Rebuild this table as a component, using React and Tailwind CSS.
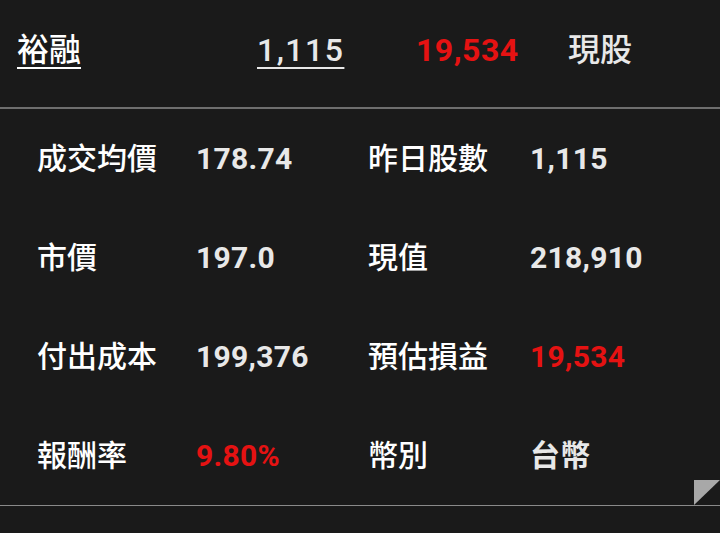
const rows = [
  { l: '成交均價', v: '178.74', l2: '昨日股數', v2: '1,115' },
  { l: '市價', v: '197.0', l2: '現值', v2: '218,910' },
  { l: '付出成本', v: '199,376', l2: '預估損益', v2: '19,534', red2: true },
  { l: '報酬率', v: '9.80%', red: true, l2: '幣別', v2: '台幣' },
];

const cjk = { fontFamily: 'Roboto, "Noto Sans CJK TC", sans-serif' };

export default function App() {
  return (
    <div className="w-[720px] h-[533px] bg-[#1a1a1a] overflow-hidden" style={cjk}>
      {/* header */}
      <div className="h-[107px] flex items-center pb-[8px] text-[32px] font-medium">
        <span className="ml-[17px] w-[240px] text-white underline underline-offset-[6px] decoration-2">裕融</span>
        <span className="w-[159px] text-[#e8e8e8] underline underline-offset-[6px] decoration-2 tracking-[1.5px]">1,115</span>
        <span className="w-[152px] text-[#e51212] font-bold tracking-[0.5px]">19,534</span>
        <span className="text-[#e8e8e8]">現股</span>
      </div>
      <div className="h-[2px] bg-[#6e6e6e]" />

      {/* detail rows */}
      <div className="relative border-b border-[#8a8a8a]">
        {rows.map((r) => (
          <div key={r.l} className="h-[99px] flex items-center pl-[37px] text-[30px] font-medium">
            <span className="w-[159px] text-white">{r.l}</span>
            <span className={`w-[172px] font-bold tracking-[0.3px] ${r.red ? 'text-[#e51212]' : 'text-[#e8e8e8]'}`}>{r.v}</span>
            <span className="w-[162px] text-white">{r.l2}</span>
            <span className={`font-bold tracking-[0.3px] ${r.red2 ? 'text-[#e51212]' : 'text-[#e8e8e8]'}`}>{r.v2}</span>
          </div>
        ))}
        <svg className="absolute right-0 bottom-0" width="26" height="25" viewBox="0 0 26 25">
          <polygon points="0,0 26,0 0,25" fill="#a8a8a8" />
        </svg>
      </div>
    </div>
  );
}
